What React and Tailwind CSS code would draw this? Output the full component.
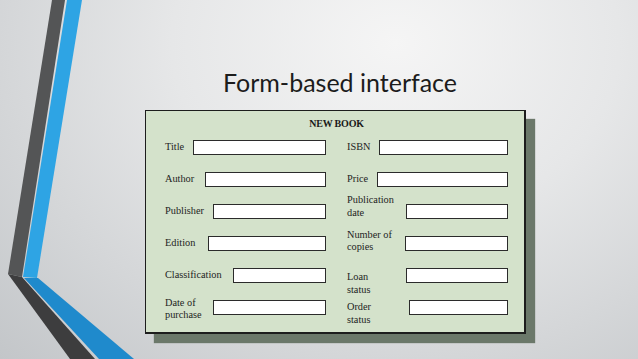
import React from "react";

const serif = { fontFamily: '"Liberation Serif", "Times New Roman", serif' };

function Field({ label, w, two, labelClass = "" }) {
  return (
    <div className="flex h-[15px] items-center justify-between">
      <div className={`text-[10.3px] leading-[12.5px] text-[#1e1e1e] ${labelClass}`}>
        {two ? (
          <>
            <div>{label[0]}</div>
            <div>{label[1]}</div>
          </>
        ) : (
          label
        )}
      </div>
      <div
        className="h-[15px] shrink-0 border-[1.5px] border-[#2b2b2b] bg-white"
        style={{ width: w }}
      />
    </div>
  );
}

export default function App() {
  return (
    <div className="relative h-[359px] w-[638px] overflow-hidden bg-[radial-gradient(ellipse_at_62%_12%,#f5f5f5_0%,#e6e7e8_40%,#c3c6c9_100%)]">
      <svg
        className="pointer-events-none absolute inset-0"
        width="638"
        height="359"
        viewBox="0 0 638 359"
      >
        <polygon points="52,0 65,0 22,277 8,274" fill="#545556" />
        <polygon points="67,0 82,0 37,278 23,277" fill="#2ea4e4" />
        <polygon points="8,274 22,277 95,359 70,359" fill="#3d3d3e" />
        <polygon points="24,278 38,278 134,359 99,359" fill="#1f8acc" />
      </svg>

      <div className="relative ml-[145px] w-[381px] pt-[67px]">
        <h1
          className="pl-[9px] text-center text-[25px] leading-[30px] text-[#1c1c1c]"
          style={{ fontFamily: 'Lato, "Open Sans", sans-serif' }}
        >
          Form-based interface
        </h1>

        <div
          className="mt-[13px] border border-r-2 border-b-2 border-[#1d1d1d] bg-[#d4e2cb] pt-[7px] pr-[16px] pb-[17px] pl-[19px] shadow-[9px_9px_1px_#6b786a]"
          style={serif}
        >
          <div className="h-[12px] text-center text-[10px] font-bold leading-[12px] tracking-[-0.2px] text-[#1a1a1a]">
            NEW BOOK
          </div>
          <div className="mt-[10px] grid grid-cols-2 gap-x-[21px] gap-y-[17px]">
            <Field label="Title" w={133} />
            <Field label="ISBN" w={129} />
            <Field label="Author" w={121} />
            <Field label="Price" w={131} />
            <Field label="Publisher" w={113} />
            <Field label={["Publication", "date"]} two w={102} labelClass="pb-[10px]" />
            <Field label="Edition" w={118} />
            <Field label={["Number of", "copies"]} two w={103} labelClass="pb-[5px]" />
            <Field label="Classification" w={93} />
            <Field label={["Loan", "status"]} two w={102} labelClass="pt-[16px]" />
            <Field label={["Date of", "purchase"]} two w={113} labelClass="pt-[3px]" />
            <Field label={["Order", "status"]} two w={99} labelClass="pt-[12px]" />
          </div>
        </div>
      </div>
    </div>
  );
}
